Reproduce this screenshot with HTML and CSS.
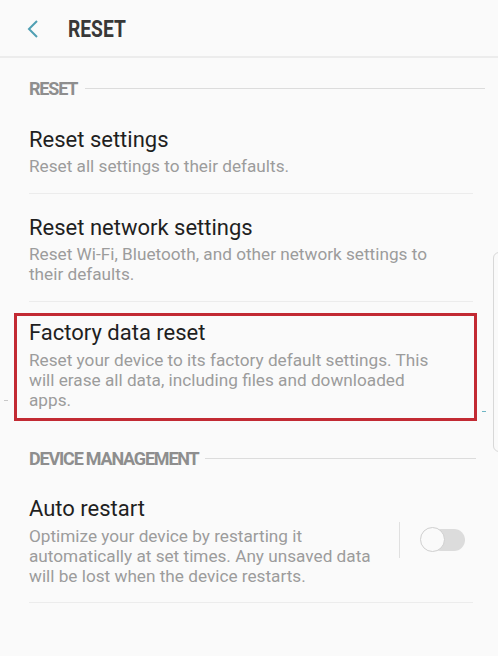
FILE: index.html
```html
<!DOCTYPE html>
<html>
<head>
<meta charset="utf-8">
<link rel="stylesheet" href="styles.css">
</head>
<body>
<div class="screen">
  <header class="appbar">
    <svg class="back" width="14" height="20" viewBox="0 0 14 20"><path d="M11 2 L3 10 L11 18" fill="none" stroke="#4f9fb3" stroke-width="2"/></svg>
    <h1 class="title">RESET</h1>
  </header>
  <div class="content">
    <div class="section section-1">
      <span class="section-label">RESET</span>
      <span class="section-line"></span>
    </div>
    <div class="item">
      <div class="item-title">Reset settings</div>
      <div class="item-sub">Reset all settings to their defaults.</div>
    </div>
    <div class="item">
      <div class="item-title">Reset network settings</div>
      <div class="item-sub">Reset Wi-Fi, Bluetooth, and other network settings to their defaults.</div>
    </div>
    <div class="item item-last highlight">
      <div class="item-title">Factory data reset</div>
      <div class="item-sub">Reset your device to its factory default settings. This will erase all data, including files and downloaded apps.</div>
    </div>
    <div class="section section-2">
      <span class="section-label">DEVICE MANAGEMENT</span>
      <span class="section-line"></span>
    </div>
    <div class="item item-toggle">
      <div class="item-text">
        <div class="item-title">Auto restart</div>
        <div class="item-sub">Optimize your device by restarting it automatically at set times. Any unsaved data will be lost when the device restarts.</div>
      </div>
      <div class="vsep"></div>
      <div class="switch"><span class="knob"></span></div>
    </div>
  </div>
  <div class="scroll-ind"></div>
  <span class="tick tick-teal"></span>
  <span class="tick tick-gray"></span>
</div>
</body>
</html>
```
FILE: styles.css
```css
html, body { margin: 0; padding: 0; }
body {
  background: #fafafa;
  font-family: Roboto, "Noto Sans", sans-serif;
  width: 498px;
  height: 656px;
  overflow: hidden;
}
.screen { position: relative; height: 656px; }
.appbar {
  height: 58px;
  display: flex;
  align-items: center;
  border-bottom: 2px solid #ececec;
  box-sizing: border-box;
}
.back { margin-left: 26px; margin-top: 2px; }
.title {
  margin: 2px 0 0 28px;
  font-size: 24px;
  font-weight: 700;
  color: #383838;
  transform: scaleX(0.8);
  transform-origin: left center;
}
.content { padding: 0 0 0 29px; }
.section {
  display: flex;
  align-items: center;
  height: 30px;
  padding-right: 13px;
}
.section-1 { margin-top: 15px; margin-bottom: 3px; }
.section-label {
  font-size: 18px;
  font-weight: 700;
  color: #8e8e8e;
  letter-spacing: -1.2px;
}
.section-line {
  flex: 1;
  height: 1px;
  background: #dcdcdc;
  margin-left: 8px;
}
.item {
  border-bottom: 1px solid #ececec;
  margin-right: 25px;
  padding: 21px 0 17px;
}
.item-title {
  font-size: 22px;
  color: #1f1f1f;
  line-height: 26px;
}
.item-sub {
  font-size: 17.2px;
  color: #9c9c9c;
  line-height: 20px;
  margin-top: 3px;
  padding-right: 24px;
}
.item-last { border-bottom: none; }
.highlight {
  margin-left: -15px;
  margin-right: 21px;
  padding: 4px 15px 8px 12px;
  border: 3px solid #c22a33;
  margin-top: 11px;
}
.highlight .item-sub { margin-top: 4px; padding-right: 11px; }
.section-2 { margin-top: 22px; padding-right: 22px; }
.section-2 .section-line { margin-left: 6px; }
.item-toggle {
  display: flex;
  align-items: flex-start;
  padding-top: 23px;
  padding-bottom: 16px;
  margin-right: 25px;
}
.item-text { width: 360px; }
.item-toggle .item-sub { padding-right: 0; margin-top: 4px; }
.vsep {
  width: 1px;
  height: 36px;
  background: #e0e0e0;
  margin: 26px 0 0 10px;
}
.switch {
  position: relative;
  width: 45px;
  height: 25px;
  margin: 31px 0 0 20px;
}
.switch::before {
  content: "";
  position: absolute;
  left: 10px; right: 0; top: 2px; bottom: 1px;
  background: #dcdcdc;
  border-radius: 11px;
}
.knob {
  position: absolute;
  left: 0; top: 0;
  width: 23px; height: 23px;
  border-radius: 50%;
  background: #fafafa;
  border: 1px solid #cfcfcf;
}
.scroll-ind {
  position: absolute;
  left: 493px;
  top: 252px;
  width: 12px;
  height: 200px;
  border: 1px solid #d8d8d8;
  border-radius: 6px;
  box-sizing: border-box;
}
.tick {
  position: absolute;
  height: 1px;
  width: 4px;
}
.tick-teal { left: 482px; top: 411px; background: #6fb6c4; }
.tick-gray { left: 4px; top: 400px; background: #c8c8c8; }
```
